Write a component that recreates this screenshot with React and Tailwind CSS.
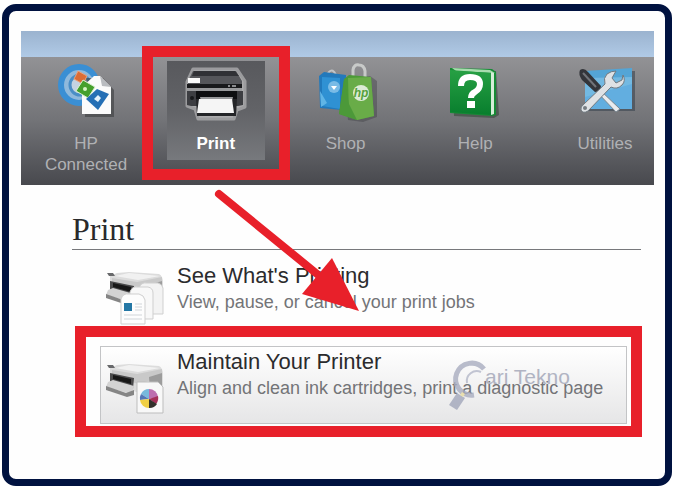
import React from 'react';

const ConnectedIcon = () => (
  <svg viewBox="0 0 64 64" className="w-16 h-16" aria-hidden="true">
    <circle cx="25" cy="24" r="18" fill="#8fb9dc" />
    <circle cx="25" cy="24" r="18" fill="none" stroke="#3a8fd4" strokeWidth="6" />
    <circle cx="26" cy="24" r="10" fill="#c4d3e2" stroke="#4a8ec6" strokeWidth="3" />
    <path d="M31 17h18l11 12v27H31z" fill="#3c3d40" opacity=".6" />
    <path d="M28 26l12-11h6l11 11v27H28z" fill="#fbfbfb" />
    <path d="M46 15l11 11-9-1z" fill="#b9bcc0" />
    <path d="M24 10l9 5-4 8-9-5z" fill="#dc6c35" stroke="#e9a27c" />
    <path d="M29 19l12 7-7 11-12-7z" fill="#45a02d" stroke="#d8efd0" />
    <circle cx="31" cy="28" r="2" fill="#d6f3c4" />
    <path d="M43 28l12 5-11 16-12-11z" fill="#246fb5" />
    <path d="M44 34l3 3-3 4-4-3z" fill="#e2f1fb" />
  </svg>
);

const PrintIcon = () => (
  <svg viewBox="0 0 64 64" className="w-16 h-16" aria-hidden="true">
    <path d="M9 8h44l8 12v26l-8 3-3 9H14l-3-10-8-3V21z" fill="#b5b5b6" stroke="#a3a3a5" strokeWidth="3" strokeLinejoin="round" opacity=".9" />
    <path d="M9 10h43l6 10v5H4v-5z" fill="#55565a" />
    <path d="M10 10h41l4 5H8z" fill="#303135" />
    <path d="M4 17h12v5H4z" fill="#fafafa" />
    <path d="M3 23h55v4H3z" fill="#18191b" />
    <path d="M44 24h2v2h-2zM48 24h4v2h-4z" fill="#8a8b8e" />
    <path d="M3 27h55v3H3z" fill="#98999b" />
    <path d="M3 30h56v14l-5 1H7l-4-1z" fill="#3d3e42" />
    <circle cx="8" cy="37" r="2" fill="#17181a" />
    <path d="M12 30h41v8H12z" fill="#0e0f11" />
    <path d="M12 38h41l-1 17H13z" fill="#242528" />
    <path d="M16 36h33l-1 4H17z" fill="#97989a" />
    <path d="M15 38h33l2 14H13z" fill="#f5f5f5" />
  </svg>
);

const ShopIcon = () => (
  <svg viewBox="0 0 64 64" className="w-16 h-16" aria-hidden="true">
    <path d="M11 16l4-5q4-4 7 3" fill="none" stroke="#c2c4c6" strokeWidth="2" />
    <path d="M5 15l5-4 22 3v32l-4 3-22-2z" fill="#2279bb" />
    <path d="M8 16l18 1v31l-18-3z" fill="#2f91d3" />
    <path d="M6 30l7 12-6 4z" fill="#60b5e6" />
    <circle cx="20" cy="26" r="6" fill="#79bbe6" />
    <path d="M17 25h6l-3 4z" fill="#fff" />
    <path d="M30 20l26-5 7 5v36l-14 5-15-2z" fill="#3b3d40" opacity=".4" />
    <path d="M39 17V9q1-6 6-5 5 0 6 6v8" fill="none" stroke="#c8cac9" strokeWidth="3" />
    <path d="M30 18l5-4 22 2 3 39-17 4-18-6z" fill="#4c9a37" />
    <path d="M34 17l23-1 3 39-17 4-8-5z" fill="#69ac48" />
    <path d="M30 19l5 24 8 16-18-6z" fill="#4c9939" />
    <circle cx="47" cy="32" r="8" fill="#dcebd5" />
    <text x="47" y="36" textAnchor="middle" fill="#55a13d" className="font-['Liberation_Sans',sans-serif] text-[12px] italic font-bold">hp</text>
  </svg>
);

const HelpIcon = () => (
  <svg viewBox="0 0 64 64" className="w-16 h-16" aria-hidden="true">
    <defs>
      <linearGradient id="book" x1="0" y1="0" x2="0" y2="1">
        <stop offset="0" stopColor="#27a044" />
        <stop offset="1" stopColor="#087e2d" />
      </linearGradient>
    </defs>
    <path d="M10 9l43 1 3 44-5 3-40-2z" fill="#37483b" opacity=".6" />
    <path d="M7 7l42 1 4 3v43l-4 1-42-3z" fill="#168a35" />
    <path d="M9 7l38 2 5 3-39-2z" fill="#a8dcae" />
    <path d="M48 11l3 1v41l-3 1z" fill="#d6edd8" />
    <path d="M7 9l41 3v42L7 51z" fill="url(#book)" />
    <path d="M18 25q0-9 9-9 10 0 10 7 0 5-5 8-4 2-4 6" fill="none" stroke="#fff" strokeWidth="6" />
    <path d="M24 40h8v7h-8z" fill="#fff" />
  </svg>
);

const UtilitiesIcon = () => (
  <svg viewBox="0 0 64 64" className="w-16 h-16" aria-hidden="true">
    <path d="M14 10h48v40H14z" fill="#3a4550" opacity=".6" />
    <path d="M12 10l47-3v41H12z" fill="#54a5d6" />
    <path d="M12 17l47-1v32H12z" fill="#73b9e2" />
    <path d="M12 36l47-13v25H12z" fill="#62aee0" />
    <path d="M26 28l21 20-4 3-20-21z" fill="#e9ebee" stroke="#7a8791" />
    <path d="M7 9q4-3 8 2l13 14-1 5-5 1L9 19q-4-6-2-10z" fill="#33353a" />
    <path d="M10 12l13 14" stroke="#71747a" strokeWidth="2" />
    <path d="M43 10l-4 7 4 5 6-3 1-5q3 6-1 10-5 5-11 2L15 50q-5 3-7-1-1-3 3-6l21-20q-2-6 2-10 4-3 9-3z" fill="#dfe2e5" stroke="#707980" />
    <circle cx="12" cy="47" r="2" fill="#777d82" />
  </svg>
);

const PrinterBody = () => (
  <g>
    <path d="M5 6l7-3 12-1 30 2q4 2 4 9v17L34 31 5 20z" fill="#dcdcdc" />
    <path d="M10 6l14-3 31 3-22 4z" fill="#f1f1f1" />
    <path d="M7 8l25 4 25-5v8l-24 7L7 13z" fill="#c9c9c9" />
    <path d="M44 15l13-4v16l-12 5z" fill="#9c9c9c" />
    <path d="M2 3h6l2 3H4z" fill="#68696b" />
    <path d="M5 11l24 5-1 11-23-7z" fill="#4a4a4b" />
    <path d="M8 13l18 4v5L8 17z" fill="#171717" />
    <path d="M3 20l5-2 21 6-3 8L1 25z" fill="#d3d3d3" />
    <path d="M1 24l20 7 8-3v5l-7 2L1 28z" fill="#858585" />
  </g>
);

const JobsIcon = () => (
  <svg viewBox="0 0 64 64" className="w-16 h-16 shrink-0 my-1.5" aria-hidden="true">
    <g transform="translate(0 3)">
      <PrinterBody />
    </g>
    <g stroke="#cfcfcf">
      <path d="M34 21q2-6 8-5h11q4 1 5 5v26H34z" fill="#f3f3f3" />
      <path d="M25 25q2-6 8-5h10q5 1 5 6v26H25z" fill="#f8f8f8" />
      <path d="M16 32q2-6 8-5h10q5 1 6 6v24H16z" fill="#fdfdfd" />
    </g>
    <path d="M19 36h8v8h-8z" fill="#2477a5" />
    <path d="M30 37h7M30 40h7M30 43h7M19 48h18M19 52h18" stroke="#d1d5d9" />
  </svg>
);

const InkIcon = () => (
  <svg viewBox="0 0 64 64" className="w-16 h-16 shrink-0 my-1.5" aria-hidden="true">
    <g transform="translate(0 9)">
      <PrinterBody />
    </g>
    <path d="M32 29h21l5 5v26H32z" fill="#f8f8f8" stroke="#bdbdbd" />
    <g transform="translate(1 2)">
      <path d="M43 44V34a9 9 0 0 0-8 5z" fill="#78b9dc" />
      <path d="M43 44l-8-5a9 9 0 0 0-1 6z" fill="#5477b7" />
      <path d="M43 44V34a9 9 0 0 1 9 8z" fill="#bd6eaf" />
      <path d="M43 44l9-3a9 9 0 0 1-2 8z" fill="#a52f59" />
      <path d="M43 44l8 5a9 9 0 0 1-8 4z" fill="#32302b" />
      <path d="M43 44v9a9 9 0 0 1-9-8z" fill="#f0cf45" />
    </g>
  </svg>
);

const Arrow = () => (
  <svg viewBox="0 0 148 124" className="absolute z-20 left-[47px] top-[128px] w-[148px] h-[124px] pointer-events-none" aria-hidden="true">
    <path d="M5 5l103 84" stroke="#e8202a" strokeWidth="8" strokeLinecap="round" />
    <path d="M118 69l27 53-57-17z" fill="#e8202a" />
  </svg>
);

const Watermark = () => (
  <span className="absolute left-[346px] top-3 flex opacity-80 pointer-events-none">
    <svg viewBox="0 0 48 52" className="w-12 h-[52px]" aria-hidden="true">
      <path d="M37 10A16 16 0 1 0 27 36" fill="none" stroke="#a9adc0" strokeWidth="5" />
      <path d="M34 13a10 10 0 0 0-14 11" fill="none" stroke="#b4b8c9" strokeWidth="2" />
      <path d="M10 34l8 5-8 12-8-5z" fill="#a2a7bb" />
      <path d="M15 33l3 2-2 3-3-2z" fill="#e7dba0" />
    </svg>
    <span className="-ml-2.5 pt-1 text-[21px] leading-7 text-[#a0a4b6] whitespace-nowrap">ari Tekno</span>
  </span>
);

const navItems = [
  { label: 'HP Connected', Icon: ConnectedIcon },
  { label: 'Print', Icon: PrintIcon, active: true },
  { label: 'Shop', Icon: ShopIcon },
  { label: 'Help', Icon: HelpIcon },
  { label: 'Utilities', Icon: UtilitiesIcon },
];

const tasks = [
  {
    title: "See What's Printing",
    text: 'View, pause, or cancel your print jobs',
    Icon: JobsIcon,
  },
  {
    title: 'Maintain Your Printer',
    text: 'Align and clean ink cartridges, print a diagnostic page',
    Icon: InkIcon,
    active: true,
  },
];

const NavItem = ({ label, Icon, active }) => (
  <div className="relative w-[98px]">
    <button
      className={
        active
          ? 'w-full flex flex-col items-center gap-2 pb-1.5 bg-linear-to-b from-[#58595d] via-[#626367] to-[#77797d] text-white font-bold'
          : 'w-full flex flex-col items-center gap-2 pb-1.5 text-[#b0b1b4]'
      }
    >
      <Icon />
      <span className="text-[17px] leading-[21px]">{label}</span>
    </button>
    {active && (
      <>
        <span className="absolute -left-[25px] -right-[25px] -top-[15px] -bottom-5 border-[11px] border-[#e8202a] pointer-events-none" />
        <Arrow />
      </>
    )}
  </div>
);

const Task = ({ title, text, Icon, active }) => (
  <a
    href="#"
    className={
      active
        ? 'relative flex gap-2 pl-1 border border-[#c3c4c6] bg-linear-to-b from-white to-[#e6e6e7]'
        : 'relative flex gap-2 pl-1 border border-transparent'
    }
  >
    <Icon />
    <span className="pt-0.5 leading-[26px] whitespace-nowrap">
      <span className="block text-[22px] text-[#2b2b2d]">{title}</span>
      <span className="block text-[18px] text-[#737477]">{text}</span>
    </span>
    {active && (
      <>
        <Watermark />
        <span className="absolute -left-[26px] -right-4 -top-[21px] -bottom-3.5 border-[11px] border-[#e8202a] pointer-events-none" />
      </>
    )}
  </a>
);

const App = () => {
  return (
    <div className="min-h-screen flex bg-white pl-0.5 pr-1 pt-1 pb-[3px] font-['Liberation_Sans',Arial,sans-serif]">
      <div className="flex-1 min-w-0 rounded-[14px] border-[7px] border-[#001240] bg-[#fefefe] pt-5 pl-3 pr-[11px]">
        <header>
          <div className="h-[26px] bg-linear-to-b from-[#9bb3cf] to-[#b0cae6]" />
          <nav className="flex justify-between items-start pl-4 pt-1 pb-1 bg-linear-to-b from-[#929295] via-[#727377] to-[#48494e]">
            {navItems.map((item) => (
              <NavItem key={item.label} {...item} />
            ))}
          </nav>
        </header>
        <main className="mt-[25px] ml-[51px] mr-[13px]">
          <h1 className="border-b border-[#77787b] font-['Liberation_Serif',serif] text-[32px] leading-[39px] text-[#29292b]">
            Print
          </h1>
          <div className="flex flex-col gap-2 mt-2.5 ml-7 mr-3.5">
            {tasks.map((task) => (
              <Task key={task.title} {...task} />
            ))}
          </div>
        </main>
      </div>
    </div>
  );
};

export default App;
